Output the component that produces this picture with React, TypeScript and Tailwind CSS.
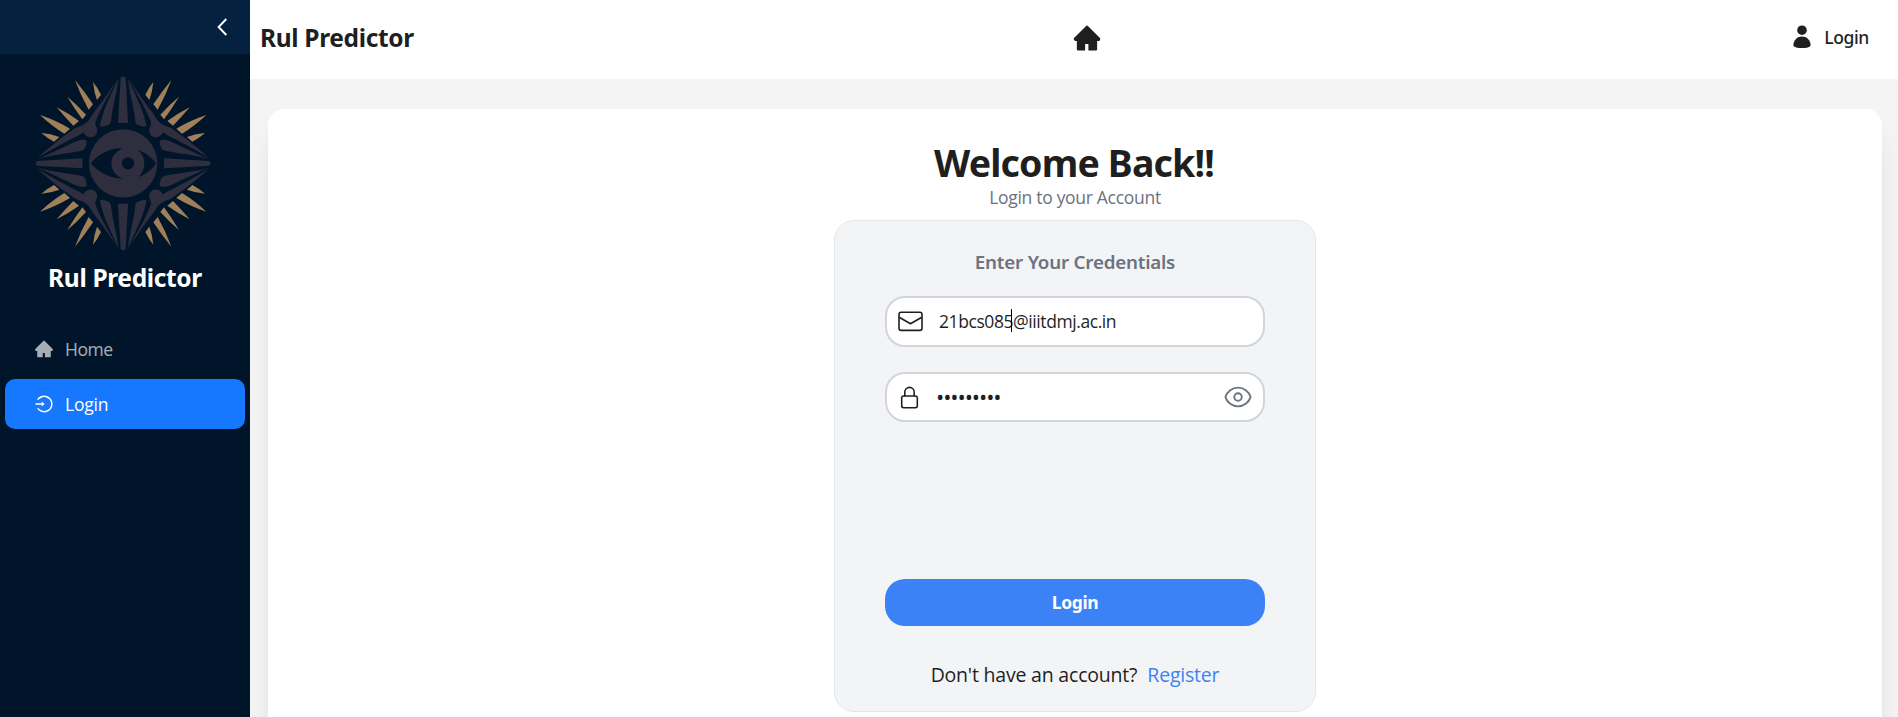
import { AiFillHome, AiOutlineLogin } from "react-icons/ai";

function Ray({ d }: { d: string }) {
  return <path d={d} fill="#9f8059" />;
}

/* One quarter of the emblem (top left); the others are mirrored copies. */
function Quadrant() {
  return (
    <>
      <g fill="#2f2e3f">
        <path d="M356 234 C335 262 308 305 282 337 C274 349 268 361 260 367 C250 376 239 379 226 384 C190 408 145 444 112 474 C150 450 205 422 238 405 C246 400 249 396 251 398 C257 410 268 413 277 411 C289 408 294 395 290 384 C287 376 284 372 287 364 C298 335 327 280 356 234 Z" />
        <path d="M355 238 C339 270 313 325 306 352 C304 362 300 372 300 377 C303 383 312 380 322 376 C329 374 332 371 333 362 C337 325 350 280 355 238 Z" />
        <path d="M113 477 C150 462 205 434 231 423 C242 419 254 418 259 422 C262 427 258 436 255 445 C252 452 245 452 237 454 C200 461 150 466 113 477 Z" />
      </g>
      <Ray d="M225 240 Q254 275 279 313 L266 329 Q242 287 225 240 Z" />
      <Ray d="M279 246 Q293 263 303 284 L291 300 Q282 276 279 246 Z" />
      <Ray d="M202 290 Q231 314 258 344 L247 358 Q224 327 202 290 Z" />
      <Ray d="M170 322 Q204 339 237 363 L220 377 Q194 351 170 322 Z" />
      <Ray d="M120 345 Q166 360 210 386 L193 401 Q156 379 120 345 Z" />
      <Ray d="M124 399 Q152 401 178 411 L162 425 Q141 414 124 399 Z" />
    </>
  );
}

function Emblem() {
  return (
    <svg viewBox="105 225 530 528" className="h-[176px] w-[176.7px]" aria-hidden="true">
      <Quadrant />
      <g transform="translate(739 0) scale(-1 1)">
        <Quadrant />
      </g>
      <g transform="translate(0 980) scale(1 -1)">
        <Quadrant />
      </g>
      <g transform="translate(739 980) scale(-1 -1)">
        <Quadrant />
      </g>
      <g fill="#2f2e3f">
        <path d="M362 233 Q369.5 226 377 233 L384 369 H354 Z" />
        <path d="M362 747 Q369.5 754 377 747 L384 611 H354 Z" />
        <path d="M111 483 Q103 490 111 497 L247 505 V475 Z" />
        <path d="M628 483 Q636 490 628 497 L492 505 V475 Z" />
        <circle cx="369.5" cy="490" r="102.5" />
      </g>
      <g fill="#001529">
        <path d="M271 490 C300 458 335 442 369 445 C346 454 334 471 334 490 C334 510 346 528 369 536 C330 536 298 518 271 490 Z" />
        <path d="M469 490 C453 471 436 457 414 450 C427 461 433 475 433 490 C433 507 427 519 415 531 C436 525 454 510 469 490 Z" />
        <circle cx="384" cy="490" r="18.5" />
      </g>
    </svg>
  );
}

function PersonIcon() {
  return (
    <svg viewBox="0 0 18 24" className="mt-[-1px] h-6 w-[18px]" fill="#1f1f1f" aria-hidden="true">
      <circle cx="9" cy="5.2" r="4.8" />
      <path d="M9 11.4 C13.6 11.4 17.6 14.8 17.6 20.4 C17.6 22 13 23 9 23 C5 23 .4 22 .4 20.4 C.4 14.8 4.4 11.4 9 11.4 Z" />
    </svg>
  );
}

function MailIcon() {
  return (
    <svg viewBox="0 0 25 21" className="h-[21px] w-[25px]" fill="none" stroke="#1f1f1f" strokeWidth="1.6" strokeLinejoin="round" aria-hidden="true">
      <rect x="1" y="1.2" width="23" height="18.2" rx="2.2" />
      <path d="M1.2 6.2 L12.5 12.7 L23.8 6.2" />
    </svg>
  );
}

function LockIcon() {
  return (
    <svg viewBox="0 0 24 24" className="size-[25px]" fill="none" stroke="#1f1f1f" strokeWidth="1.5" strokeLinecap="round" strokeLinejoin="round" aria-hidden="true">
      <path d="M16.5 10.5V6.75a4.5 4.5 0 1 0-9 0v3.75" />
      <rect x="4.5" y="10.5" width="15" height="11.25" rx="1.8" />
    </svg>
  );
}

function EyeIcon() {
  return (
    <svg viewBox="0 0 24 24" className="size-[30px]" fill="none" stroke="#6b7280" strokeWidth="1.5" strokeLinecap="round" strokeLinejoin="round" aria-hidden="true">
      <path d="M2.036 12.322a1.012 1.012 0 0 1 0-.639C3.423 7.51 7.36 4.5 12 4.5c4.638 0 8.573 3.007 9.963 7.178.07.207.07.431 0 .639C20.577 16.49 16.64 19.5 12 19.5c-4.638 0-8.573-3.007-9.963-7.178Z" />
      <circle cx="12" cy="12" r="3" />
    </svg>
  );
}

function Sidebar() {
  return (
    <aside className="flex w-[250px] shrink-0 flex-col bg-[#001529]">
      <button className="flex h-[54px] shrink-0 items-center justify-end bg-[#042140] pr-[22px]" aria-label="Collapse">
        <svg viewBox="0 0 12 18" className="mt-[-1px] h-[18px] w-3" fill="none" stroke="#fff" strokeWidth="1.9" aria-hidden="true">
          <path d="M10.3 1 L2.6 9 L10.3 17" />
        </svg>
      </button>
      <div className="flex flex-col items-center pt-[21px] pr-[3px]">
        <Emblem />
      </div>
      <h2 className="mt-3 text-center font-['Noto_Sans',sans-serif] text-[24.5px] leading-[30px] font-bold tracking-[-0.35px] text-white">
        Rul Predictor
      </h2>
      <nav className="mt-[31px] flex flex-col gap-[5px] px-[5px] text-[17.5px]">
        <a className="flex h-[50px] items-center gap-[11px] rounded-[10px] pl-[29px] tracking-[-0.5px] text-white/65">
          <AiFillHome className="size-5" />
          Home
        </a>
        <a className="flex h-[50px] items-center gap-[11px] rounded-[10px] bg-[#1677ff] pl-[29px] tracking-[-0.2px] text-white">
          <AiOutlineLogin className="size-5" />
          Login
        </a>
      </nav>
    </aside>
  );
}

function Header() {
  return (
    <header className="flex h-[79px] shrink-0 items-center justify-between bg-white pr-[29px] pb-1 pl-2.5 font-['Noto_Sans',sans-serif]">
      <h1 className="text-[24.5px] leading-[30px] font-bold tracking-[-0.35px]">Rul Predictor</h1>
      <AiFillHome className="mr-[33px] size-[30px]" />
      <div className="flex items-center justify-end gap-[13px]">
        <PersonIcon />
        <span className="text-[17.5px] font-medium tracking-[-0.35px]">Login</span>
      </div>
    </header>
  );
}

function LoginForm() {
  return (
    <form className="mt-[9px] flex h-[492px] w-[482px] flex-col items-center rounded-[20px] border border-[#e5e7eb] bg-[#f3f4f6] px-[50px] pt-[26px]">
      <h3 className="font-['Noto_Sans',sans-serif] text-[18.75px] leading-[30px] font-semibold tracking-[-0.2px] text-[#6b7280]">
        Enter Your Credentials
      </h3>
      <label className="relative mt-[19px] flex h-[51px] w-full items-center rounded-[20px] border-2 border-[#d1d5db] bg-white pl-[11px]">
        <MailIcon />
        <input
          className="ml-4 w-[280px] bg-transparent text-[17.5px] tracking-[-0.42px] outline-none"
          defaultValue="21bcs085@iiitdmj.ac.in"
        />
        <span className="absolute top-[11px] left-[124px] h-[23px] w-px bg-black" />
      </label>
      <label className="mt-[25px] flex h-[50px] w-full items-center rounded-[20px] border-2 border-[#d1d5db] bg-white pr-[10px] pl-[10px]">
        <LockIcon />
        <input
          type="password"
          className="mt-[-2px] ml-[14px] h-[30px] w-0 flex-1 bg-transparent text-[22px] tracking-[-1.1px] outline-none"
          defaultValue="password1"
        />
        <EyeIcon />
      </label>
      <button
        type="button"
        className="mt-[157px] h-[47px] w-full shrink-0 rounded-[20px] bg-[#3b82f6] font-['Noto_Sans',sans-serif] text-[17.5px] font-bold tracking-[-0.4px] text-white"
      >
        Login
      </button>
      <p className="mt-[34px] flex gap-[10px] text-[19.5px] leading-[30px] tracking-[-0.2px] whitespace-nowrap">
        Don't have an account?
        <a className="text-[#3b82f6]">Register</a>
      </p>
    </form>
  );
}

export default function App() {
  return (
    <div className="flex h-[717px] overflow-hidden bg-[#f4f4f4] font-['Open_Sans',sans-serif] text-[#1f1f1f]">
      <Sidebar />
      <div className="flex min-w-0 flex-1 flex-col">
        <Header />
        <main className="min-h-0 flex-1 overflow-hidden pt-[30px] pr-4 pl-[18px]">
          <section className="flex h-[680px] flex-col items-center rounded-[16px] bg-white pt-[31px] shadow-[0_25px_31px_-6px_rgba(0,0,0,0.1),0_10px_12px_-7px_rgba(0,0,0,0.1)]">
            <h2 className="pr-[2px] font-['Noto_Sans',sans-serif] text-[37.5px] leading-[46px] font-bold tracking-[-0.85px]">
              Welcome Back!!
            </h2>
            <p className="mt-[-3px] text-[17.5px] leading-[28px] tracking-[-0.3px] text-[#6b7280]">Login to your Account</p>
            <LoginForm />
          </section>
        </main>
      </div>
    </div>
  );
}
